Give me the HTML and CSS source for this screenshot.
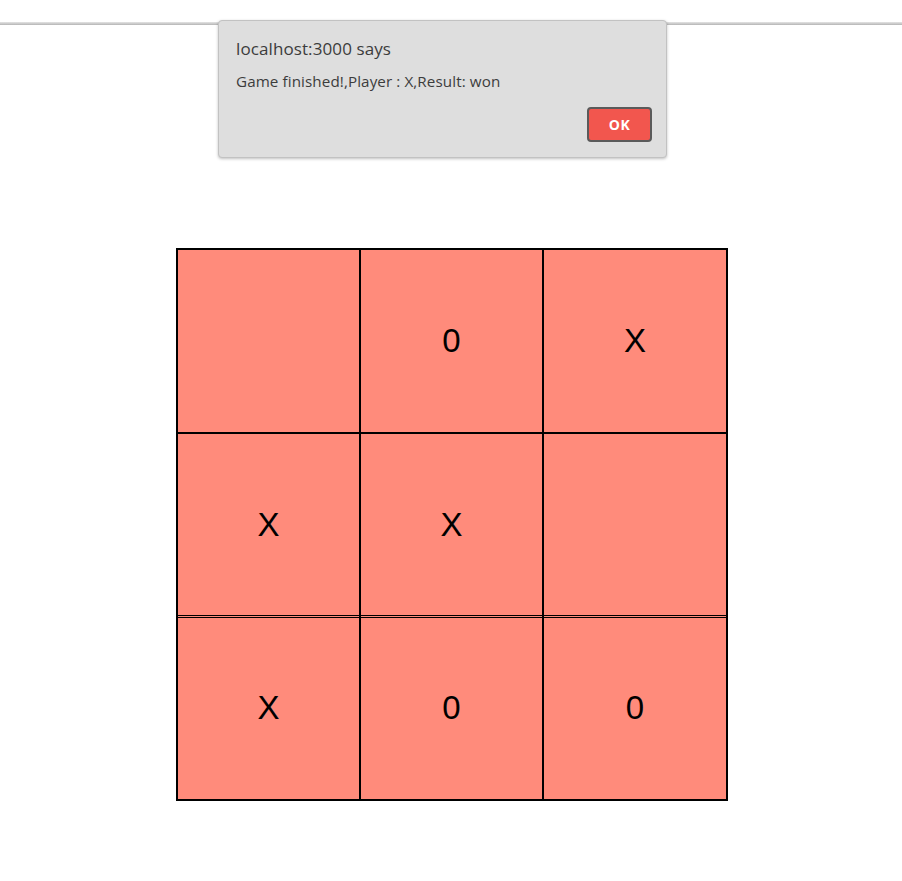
FILE: index.html
```html
<!DOCTYPE html>
<html>
<head>
<meta charset="utf-8">
<link rel="stylesheet" href="styles.css">
</head>
<body>
<div class="topbar"></div>
<main class="page">
  <div class="board">
    <div class="cell"></div>
    <div class="cell">0</div>
    <div class="cell">X</div>
    <div class="cell">X</div>
    <div class="cell">X</div>
    <div class="cell"></div>
    <div class="cell last-row">X</div>
    <div class="cell last-row">0</div>
    <div class="cell last-row">0</div>
  </div>
</main>
<div class="dialog">
  <div class="dialog-title">localhost:3000 says</div>
  <div class="dialog-msg">Game finished!,Player : X,Result: won</div>
  <div class="dialog-actions">
    <button class="ok-btn">OK</button>
  </div>
</div>
</body>
</html>
```
FILE: styles.css
```css
html, body {
  margin: 0;
  padding: 0;
  background: #ffffff;
}
body {
  width: 902px;
  height: 881px;
  overflow: hidden;
  position: relative;
}
.topbar {
  margin-top: 22px;
  height: 3px;
  background: linear-gradient(#e4e4e4, #c8c8c8 60%, #b4b4b4);
}
.page {
  padding-top: 223px;
  padding-left: 176px;
}
.board {
  width: 552px;
  background: #000;
  padding: 2px;
  box-sizing: border-box;
  display: grid;
  grid-template-columns: 181px 181px 182px;
  grid-template-rows: 182px 181px 182px;
  gap: 2px;
}
.cell {
  background: #ff8b7b;
  display: flex;
  align-items: center;
  justify-content: center;
  font-family: "Liberation Sans", Arial, sans-serif;
  font-size: 33px;
  color: #000;
}
.last-row {
  box-shadow: inset 0 1px 0 #ff8b7b, inset 0 2px 0 #000;
  margin-top: -1px;
  padding-top: 1px;
}
.dialog {
  position: absolute;
  left: 218px;
  top: 20px;
  width: 449px;
  height: 138px;
  box-sizing: border-box;
  background: #dedede;
  border: 1px solid #c2c2c2;
  border-radius: 4px;
  box-shadow: 0 1px 3px rgba(0,0,0,0.25);
  padding: 16px 15px 0 17px;
  font-family: "Open Sans", "Noto Sans", sans-serif;
  color: #3c3c3c;
}
.dialog-title {
  font-size: 17px;
  line-height: 24px;
  letter-spacing: 0.1px;
}
.dialog-msg {
  margin-top: 10px;
  font-size: 15.2px;
  line-height: 20px;
  letter-spacing: 0.1px;
}
.dialog-actions {
  display: flex;
  justify-content: flex-end;
  margin-top: 16px;
}
.ok-btn {
  width: 65px;
  height: 35px;
  margin-right: -1px;
  background: #f2564e;
  border: 2px solid #5a5a5a;
  border-radius: 4px;
  color: #fff;
  font-family: "Open Sans", "Noto Sans", sans-serif;
  font-weight: 700;
  font-size: 14px;
  letter-spacing: 0.5px;
  padding: 0;
}
```
